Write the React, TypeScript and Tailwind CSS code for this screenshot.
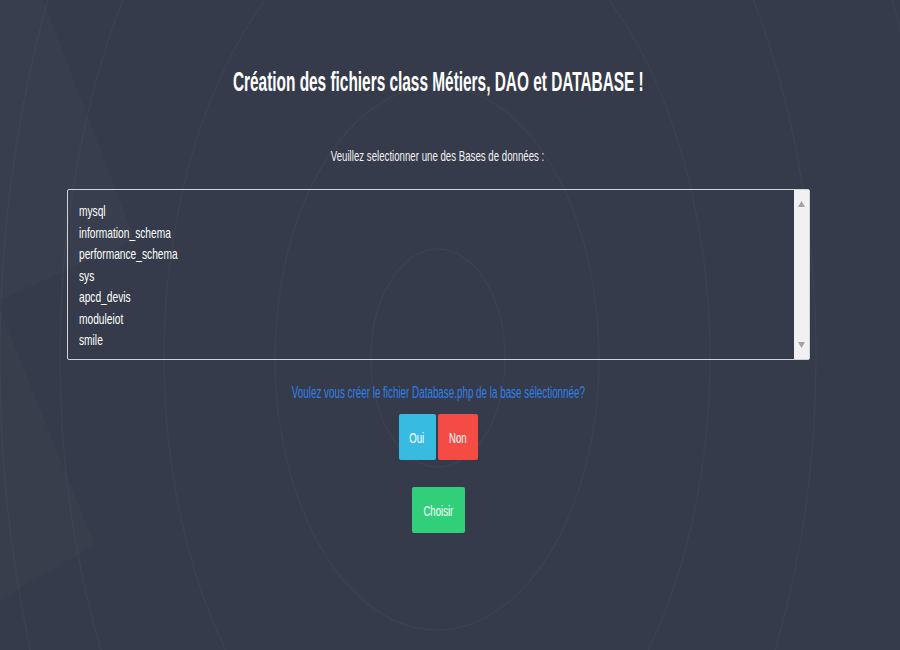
import React from "react";

const options = [
  "mysql",
  "information_schema",
  "performance_schema",
  "sys",
  "apcd_devis",
  "moduleiot",
  "smile",
];

function Backdrop() {
  return (
    <svg
      className="pointer-events-none absolute inset-0"
      width="900"
      height="650"
      viewBox="0 0 900 650"
      fill="none"
    >
      <polygon points="0,0 43,0 135,240 0,300" fill="rgba(255,255,255,0.018)" />
      <polygon points="0,310 95,545 0,600" fill="rgba(255,255,255,0.015)" />
      <g stroke="rgba(255,255,255,0.035)" strokeWidth="1.3">
        <ellipse cx="470" cy="360" rx="470" ry="820" />
        <ellipse cx="438" cy="357" rx="378" ry="647" />
        <ellipse cx="437" cy="358" rx="273" ry="461" />
        <ellipse cx="437" cy="358" rx="162" ry="272" />
        <ellipse cx="438" cy="358" rx="67" ry="109" />
      </g>
    </svg>
  );
}

function Btn({
  label,
  className,
}: {
  label: string;
  className: string;
}) {
  return (
    <button
      className={
        "flex h-[46px] items-center justify-center rounded-[2px] text-[15px] leading-none text-white " +
        className
      }
    >
      <span className="inline-block origin-center scale-x-[0.64]">{label}</span>
    </button>
  );
}

export default function App() {
  return (
    <div className="relative h-[650px] w-[900px] overflow-hidden bg-[#353b4a] font-['Liberation_Sans',Arial,sans-serif]">
      <Backdrop />
      <div className="relative flex w-[876px] flex-col items-center pt-[66px]">
        <h1 className="whitespace-nowrap text-[27px] font-bold leading-[32px] text-white">
          <span className="inline-block origin-center scale-x-[0.57]">
            Création des fichiers class Métiers, DAO et DATABASE !
          </span>
        </h1>

        <p className="mt-[48px] whitespace-nowrap text-[15px] leading-[20px] text-[#f2f2f2]">
          <span className="inline-block origin-center scale-x-[0.645]">
            Veuillez selectionner une des Bases de données :
          </span>
        </p>

        <div className="mt-[23px] flex h-[171px] w-[743px] rounded-[2px] border border-[#cfd3da]">
          <div className="flex flex-1 flex-col pl-[11px] pt-[10px]">
            {options.map((o) => (
              <div
                key={o}
                className="whitespace-nowrap text-[15px] leading-[21.5px] text-white"
              >
                <span className="inline-block origin-left scale-x-[0.68]">{o}</span>
              </div>
            ))}
          </div>
          <div className="flex w-[15px] flex-col items-center justify-between bg-[#f1f1f1] pb-[11px] pt-[11px]">
            <svg width="7" height="6" viewBox="0 0 7 6">
              <polygon points="3.5,0 7,6 0,6" fill="#a3a3a3" />
            </svg>
            <svg width="7" height="6" viewBox="0 0 7 6">
              <polygon points="0,0 7,0 3.5,6" fill="#a3a3a3" />
            </svg>
          </div>
        </div>

        <p className="mt-[22px] whitespace-nowrap text-[16px] leading-[22px] text-[#2f80e8]">
          <span className="inline-block origin-center scale-x-[0.615]">
            Voulez vous créer le fichier Database.php de la base sélectionnée?
          </span>
        </p>

        <div className="mt-[10px] flex gap-[2px]">
          <Btn label="Oui" className="w-[37px] bg-[#38bbe0]" />
          <Btn label="Non" className="w-[40px] bg-[#f54b45]" />
        </div>

        <div className="mt-[27px]">
          <Btn label="Choisir" className="w-[53px] bg-[#32cf7a]" />
        </div>
      </div>
    </div>
  );
}
